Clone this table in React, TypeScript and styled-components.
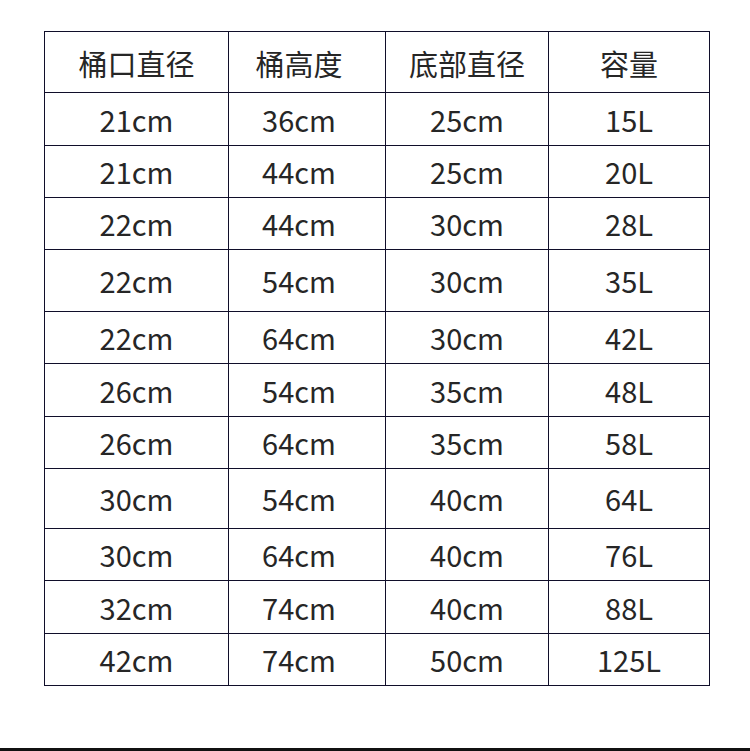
import React from "react";
import styled, { createGlobalStyle } from "styled-components";

const Global = createGlobalStyle`
  html, body { margin: 0; padding: 0; background: #fff; }
  body { font-family: "Noto Sans CJK SC", "Noto Sans", sans-serif; }
`;

const Page = styled.div`
  width: 750px;
  height: 751px;
  display: flex;
  flex-direction: column;
  justify-content: space-between;
  overflow: hidden;
`;

const TableWrap = styled.div`
  padding: 31px 0 0 44px;
`;

const Table = styled.table`
  border-collapse: collapse;
  table-layout: fixed;
  width: 665px;
`;

const Cell = styled.td<{ $shift?: number }>`
  border: 1.5px solid #100e2a;
  padding: 0 ${(p) => (p.$shift ? p.$shift * 2 : 0)}px 0 0;
  text-align: center;
  vertical-align: middle;
  font-size: 29px;
  line-height: 1;
  color: #262626;
  font-weight: 400;
  font-family: "Noto Sans CJK SC", "Noto Sans", sans-serif;
`;

const HeadCell = styled(Cell).attrs({ as: "th" })`
  padding-top: 2px;
`;

const Row = styled.tr<{ $h: number }>`
  height: ${(p) => p.$h}px;
`;

const BottomBar = styled.div`
  height: 3px;
  background: #111;
`;

const headers = ["桶口直径", "桶高度", "底部直径", "容量"];
const shifts = [0, 8, 0, 0];
const rows: [string, string, string, string, number][] = [
  ["21cm", "36cm", "25cm", "15L", 53],
  ["21cm", "44cm", "25cm", "20L", 52],
  ["22cm", "44cm", "30cm", "28L", 52],
  ["22cm", "54cm", "30cm", "35L", 62],
  ["22cm", "64cm", "30cm", "42L", 52],
  ["26cm", "54cm", "35cm", "48L", 53],
  ["26cm", "64cm", "35cm", "58L", 52],
  ["30cm", "54cm", "40cm", "64L", 60],
  ["30cm", "64cm", "40cm", "76L", 52],
  ["32cm", "74cm", "40cm", "88L", 53],
  ["42cm", "74cm", "50cm", "125L", 52],
];

export default function App() {
  return (
    <Page>
      <Global />
      <TableWrap>
        <Table>
          <colgroup>
            <col style={{ width: 184 }} />
            <col style={{ width: 157 }} />
            <col style={{ width: 163 }} />
            <col style={{ width: 161 }} />
          </colgroup>
          <thead>
            <Row $h={61}>
              {headers.map((h, i) => (
                <HeadCell key={h} $shift={shifts[i]}>
                  {h}
                </HeadCell>
              ))}
            </Row>
          </thead>
          <tbody>
            {rows.map((r, i) => (
              <Row key={i} $h={r[4]}>
                {[r[0], r[1], r[2], r[3]].map((v, j) => (
                  <Cell key={j} $shift={shifts[j]}>
                    {v}
                  </Cell>
                ))}
              </Row>
            ))}
          </tbody>
        </Table>
      </TableWrap>
      <BottomBar />
    </Page>
  );
}
